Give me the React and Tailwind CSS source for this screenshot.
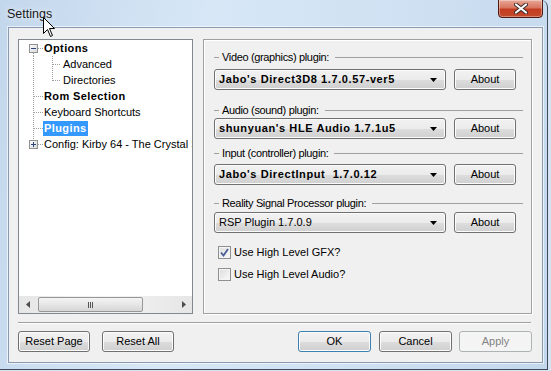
import React from "react";

// Win7 look: gradient push buttons / combo boxes
const BTN_BG =
  "bg-[linear-gradient(to_bottom,#f2f2f2_0%,#ebebeb_50%,#dddddd_51%,#cfcfcf_100%)] shadow-[inset_0_0_0_1px_#fcfcfc]";

function WinButton({ children, width, variant }) {
  let look = `border-[#707070] text-black ${BTN_BG}`;
  if (variant === "default") {
    look = `border-[#3c7fb1] text-black ${BTN_BG} shadow-[inset_0_0_0_1px_#a8dcf5]`;
  }
  if (variant === "disabled") {
    look = "border-[#adb2b5] bg-[#f4f4f4] text-[#838383]";
  }
  return (
    <div
      className={`${width} h-[21px] shrink-0 rounded-[3px] border flex items-center justify-center text-[11px] ${look}`}
    >
      {children}
    </div>
  );
}

function Combo({ text, bold }) {
  return (
    <div
      className={`w-[232px] h-[21px] shrink-0 rounded-[3px] border border-[#707070] ${BTN_BG} flex items-center pl-[4px] pr-[6px]`}
    >
      <span
        className={`flex-1 text-[11px] text-black whitespace-pre ${bold ? "font-bold tracking-[0.6px]" : ""}`}
      >
        {text}
      </span>
      <svg width="7" height="4" viewBox="0 0 7 4">
        <path d="M0 0 H7 L3.5 4 Z" fill="#000" />
      </svg>
      <div className="w-[2px]" />
    </div>
  );
}

function GroupLabel({ text, className }) {
  return (
    <div className={`flex items-center h-[14px] pr-[8px] ${className}`}>
      <div className="w-[5px] h-px bg-[#a0a0a0]" />
      <span className="ml-[3px] text-[11px] tracking-[-0.35px] text-black whitespace-nowrap">{text}</span>
      <div className="flex-1 ml-[6px] h-px bg-[#a0a0a0]" />
    </div>
  );
}

function PluginRow({ text, bold, className }) {
  return (
    <div className={`flex items-center gap-[8px] ${className}`}>
      <Combo text={text} bold={bold} />
      <WinButton width="w-[62px]">About</WinButton>
    </div>
  );
}

function CheckBox({ checked, label, className }) {
  return (
    <div className={`flex items-center h-[14px] pl-[4px] ${className}`}>
      <div className="w-[13px] h-[13px] border border-[#8e8f8f] bg-[linear-gradient(135deg,#dcdcdc,#fbfbfb)] shadow-[inset_0_0_0_1px_#f4f4f4] flex items-center justify-center">
        {checked && (
          <svg width="9" height="9" viewBox="0 0 9 9">
            <path d="M1 4.5 L3.5 7.5 L8 1" fill="none" stroke="#4a5f97" strokeWidth="1.8" />
          </svg>
        )}
      </div>
      <span className="ml-[3px] text-[11px] text-black whitespace-nowrap">{label}</span>
    </div>
  );
}

// dotted tree connectors, one svg per row
function Connector({ kind, width }) {
  const dot = { stroke: "#a0a0a0", strokeWidth: 1, strokeDasharray: "1 1" };
  const v = (x, y1, y2) => <line x1={x + 0.5} y1={y1} x2={x + 0.5} y2={y2} {...dot} />;
  const h = (x1, x2, y) => <line x1={x1} y1={y + 0.5} x2={x2} y2={y + 0.5} {...dot} />;
  const box = (plus) => (
    <g>
      <rect x="10.5" y="4.5" width="8" height="8" fill="url(#boxg)" stroke="#919191" />
      <line x1="12" y1="8.5" x2="17" y2="8.5" stroke="#2a4580" />
      {plus && <line x1="14.5" y1="6" x2="14.5" y2="11" stroke="#2a4580" />}
    </g>
  );
  return (
    <svg width={width} height="16" viewBox={`0 0 ${width} 16`} className="shrink-0">
      <defs>
        <linearGradient id="boxg" x1="0" y1="0" x2="1" y2="1">
          <stop offset="0" stopColor="#ffffff" />
          <stop offset="1" stopColor="#d6d6d6" />
        </linearGradient>
      </defs>
      {kind === "open" && (
        <g>
          {v(14, 13, 16)}
          {h(19, 24, 8)}
          {box(false)}
        </g>
      )}
      {kind === "child" && (
        <g>
          {v(14, 0, 16)}
          {v(33, 0, 16)}
          {h(34, 42, 8)}
        </g>
      )}
      {kind === "childLast" && (
        <g>
          {v(14, 0, 16)}
          {v(33, 0, 9)}
          {h(34, 42, 8)}
        </g>
      )}
      {kind === "leaf" && (
        <g>
          {v(14, 0, 16)}
          {h(15, 24, 8)}
        </g>
      )}
      {kind === "closedLast" && (
        <g>
          {v(14, 0, 4)}
          {h(19, 24, 8)}
          {box(true)}
        </g>
      )}
    </svg>
  );
}

function TreeRow({ kind, level, bold, selected, text }) {
  return (
    <div className="h-[16px] flex items-center whitespace-nowrap">
      <Connector kind={kind} width={level === 1 ? 43 : 24} />
      <span
        className={`h-[15px] leading-[15px] px-px text-[11px] ${bold ? "font-bold tracking-[0.4px]" : ""} ${
          selected ? "bg-[#3399ff] text-white" : "text-black"
        }`}
      >
        {text}
      </span>
    </div>
  );
}

function ScrollArrow({ dir }) {
  return (
    <div className="w-[17px] h-[17px] shrink-0 flex items-center justify-center">
      <svg width="4" height="7" viewBox="0 0 4 7">
        <path d={dir === "left" ? "M4 0 V7 L0 3.5 Z" : "M0 0 V7 L4 3.5 Z"} fill="#4d4d4d" />
      </svg>
    </div>
  );
}

function TreePanel() {
  return (
    <div className="w-[175px] h-[275px] shrink-0 border border-[#828790] bg-white flex flex-col overflow-hidden">
      <div className="flex-1 overflow-hidden">
        <TreeRow kind="open" level={0} bold text="Options" />
        <TreeRow kind="child" level={1} text="Advanced" />
        <TreeRow kind="childLast" level={1} text="Directories" />
        <TreeRow kind="leaf" level={0} bold text="Rom Selection" />
        <TreeRow kind="leaf" level={0} text="Keyboard Shortcuts" />
        <TreeRow kind="leaf" level={0} bold selected text="Plugins" />
        <TreeRow kind="closedLast" level={0} text="Config: Kirby 64 - The Crystal S" />
      </div>
      <div className="h-[17px] shrink-0 flex items-center bg-[linear-gradient(to_right,#e6e6e6,#f3f3f3_50%,#e6e6e6)]">
        <ScrollArrow dir="left" />
        <div className="ml-[2px] w-[105px] h-[15px] rounded-[2px] border border-[#979797] bg-[linear-gradient(to_bottom,#f4f4f4,#e6e6e6_50%,#d6d6d6)] flex items-center justify-center gap-[1px]">
          <div className="w-px h-[6px] bg-[#555]" />
          <div className="w-px h-[6px] bg-[#555]" />
          <div className="w-px h-[6px] bg-[#555]" />
        </div>
        <div className="flex-1" />
        <ScrollArrow dir="right" />
      </div>
    </div>
  );
}

function PluginsPanel() {
  return (
    <div className="w-[329px] h-[275px] shrink-0 border border-[#a0a0a0] shadow-[inset_1px_1px_0_#fff,1px_1px_0_#fff] pl-[10px] flex flex-col">
      <GroupLabel text="Video (graphics) plugin:" className="mt-[10px]" />
      <PluginRow text="Jabo's Direct3D8 1.7.0.57-ver5" bold className="mt-[5px]" />
      <GroupLabel text="Audio (sound) plugin:" className="mt-[13px]" />
      <PluginRow text="shunyuan's HLE Audio 1.7.1u5" bold className="mt-[1px]" />
      <GroupLabel text="Input (controller) plugin:" className="mt-[7px]" />
      <PluginRow text="Jabo's DirectInput  1.7.0.12" bold className="mt-[4px]" />
      <GroupLabel text="Reality Signal Processor plugin:" className="mt-[11px]" />
      <PluginRow text="RSP Plugin 1.7.0.9" className="mt-[2px]" />
      <CheckBox checked label="Use High Level GFX?" className="mt-[12px]" />
      <CheckBox label="Use High Level Audio?" className="mt-[8px]" />
    </div>
  );
}

export default function App() {
  return (
    <div className="w-[551px] h-[371px] bg-[#d4e4f3] font-['Liberation_Sans',Arial,sans-serif] overflow-hidden">
      <div className="relative w-[548px] h-[370px] rounded-tr-[7px] border-r border-b border-[#3f4b5a] bg-[linear-gradient(100deg,#c3d7ec_0%,#d7e7f6_35%,#cfe1f2_65%,#c4d8ed_100%)] flex flex-col">
        {/* title bar */}
        <div className="h-[27px] shrink-0 flex items-start">
          <span className="ml-[7px] mt-[5px] text-[12.5px] text-[#1a1a1a] [text-shadow:0_0_6px_#fff]">Settings</span>
          <div className="flex-1" />
          <div className="mr-[4px] mt-[-1px] w-[45px] h-[19px] rounded-b-[4px] border border-[#4f1a12] bg-[linear-gradient(to_bottom,#e8a897_0%,#d77560_45%,#c43d21_55%,#c24a2c_100%)] shadow-[inset_0_0_0_1px_rgba(255,255,255,0.35)] flex items-center justify-center">
            <svg width="14" height="11" viewBox="0 0 14 11">
              <path
                d="M2 1.5 L12 9.5 M12 1.5 L2 9.5"
                stroke="#3a2a2a"
                strokeWidth="4"
                strokeLinecap="round"
              />
              <path d="M2 1.5 L12 9.5 M12 1.5 L2 9.5" stroke="#fff" strokeWidth="2.2" strokeLinecap="round" />
            </svg>
          </div>
        </div>

        {/* client area */}
        <div className="ml-[8px] w-[535px] h-[336px] border border-[#8a9ab0] shadow-[0_0_0_1px_rgba(255,255,255,0.6)] bg-[#f0f0f0] flex flex-col pl-[9px] pr-[10px] pt-[11px]">
          <div className="flex gap-[10px]">
            <TreePanel />
            <PluginsPanel />
          </div>
          <div className="mt-[8px] h-[2px] border-t border-[#a0a0a0] border-b border-b-white mr-px" />
          <div className="mt-[7px] flex items-center">
            <WinButton width="w-[72px]">Reset Page</WinButton>
            <div className="w-[12px]" />
            <WinButton width="w-[72px]">Reset All</WinButton>
            <div className="flex-1" />
            <WinButton width="w-[73px]" variant="default">
              OK
            </WinButton>
            <div className="w-[8px]" />
            <WinButton width="w-[73px]">Cancel</WinButton>
            <div className="w-[7px]" />
            <WinButton width="w-[73px]" variant="disabled">
              Apply
            </WinButton>
          </div>
        </div>

        {/* mouse pointer over the title */}
        <svg className="absolute left-[43px] top-[17px]" width="13" height="21" viewBox="0 0 13 21">
          <path
            d="M0.5 0.5 V16.5 L4.5 12.5 L7.5 19.5 L9.5 18.5 L6.5 11.5 L11.5 11.5 Z"
            fill="#fff"
            stroke="#000"
            strokeWidth="1"
            strokeLinejoin="round"
          />
        </svg>
      </div>
    </div>
  );
}
